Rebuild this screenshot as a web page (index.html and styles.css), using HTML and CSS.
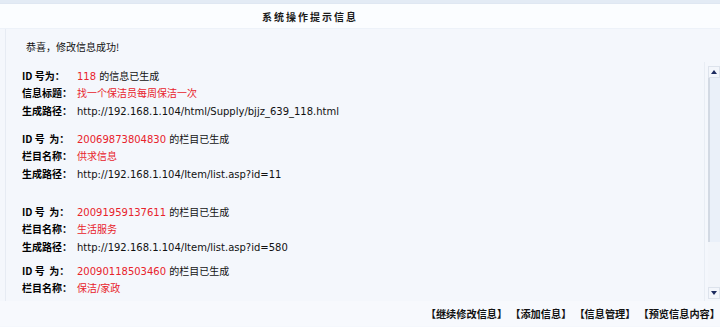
FILE: index.html
```html
<!DOCTYPE html>
<html lang="zh-CN">
<head>
    <meta charset="UTF-8">
    <title>系统操作提示信息</title>
    <link rel="stylesheet" href="styles.css">
</head>
<body>
    <div class="top-line"></div>
    <div class="caption"><span class="caption-text">系统操作提示信息</span></div>

    <div class="main">
        <p class="notice">恭喜，修改信息成功!</p>

        <div class="frame">
            <div class="frame-body">
                <div class="block">
                    <div class="row"><span class="label">ID 号为：</span><span class="red">118</span>&nbsp;的信息已生成</div>
                    <div class="row"><span class="label">信息标题：</span><span class="red">找一个保洁员每周保洁一次</span></div>
                    <div class="row path"><span class="label">生成路径：</span>http://192.168.1.104/html/Supply/bjjz_639_118.html</div>
                </div>
                <div class="block gap-s">
                    <div class="row"><span class="label">ID 号&nbsp; 为：</span><span class="red">20069873804830</span>&nbsp;的栏目已生成</div>
                    <div class="row"><span class="label">栏目名称：</span><span class="red">供求信息</span></div>
                    <div class="row path"><span class="label">生成路径：</span>http://192.168.1.104/Item/list.asp?id=11</div>
                </div>
                <div class="block gap-l">
                    <div class="row"><span class="label">ID 号&nbsp; 为：</span><span class="red">20091959137611</span>&nbsp;的栏目已生成</div>
                    <div class="row"><span class="label">栏目名称：</span><span class="red">生活服务</span></div>
                    <div class="row path"><span class="label">生成路径：</span>http://192.168.1.104/Item/list.asp?id=580</div>
                </div>
                <div class="block gap-xs">
                    <div class="row"><span class="label">ID 号&nbsp; 为：</span><span class="red">20090118503460</span>&nbsp;的栏目已生成</div>
                    <div class="row"><span class="label">栏目名称：</span><span class="red">保洁/家政</span></div>
                </div>
            </div>
            <div class="scrollbar">
                <div class="sb-btn"><span class="arrow-up"></span></div>
                <div class="sb-thumb"></div>
                <div class="sb-track"></div>
                <div class="sb-btn"><span class="arrow-down"></span></div>
            </div>
        </div>
    </div>

    <div class="links">
        <a href="#">【继续修改信息】</a>
        <a href="#">【添加信息】</a>
        <a href="#">【信息管理】</a>
        <a href="#">【预览信息内容】</a>
    </div>
</body>
</html>
```

FILE: styles.css
```css
* {
    box-sizing: border-box;
    margin: 0;
    padding: 0;
}
html, body {
    width: 720px;
    height: 327px;
    overflow: hidden;
}
body {
    font-family: "DejaVu Sans", "Noto Sans CJK SC", sans-serif;
    font-size: 10px;
    color: #111;
    background-color: #f4f7fc;
}

.top-line {
    height: 4px;
    background-color: #e3ebf5;
    border-bottom: 1px solid #dfe7f2;
}

/* caption bar */
.caption {
    height: 25px;
    display: flex;
    align-items: center;
    justify-content: center;
    padding-right: 100px;
    background-color: #fbfdff;
    border-bottom: 1px solid #edf2f9;
}
.caption-text {
    font-family: "Noto Sans CJK SC", sans-serif;
    font-weight: bold;
    letter-spacing: 2px;
    color: #1a1a1a;
}

/* main area */
.main {
    height: 272px;
    margin-left: 5px;
    border-left: 1px solid #e6ebf3;
    display: flex;
    flex-direction: column;
}
.notice {
    font-family: "Noto Sans CJK SC", sans-serif;
    padding: 11px 0 0 20px;
    height: 33px;
    line-height: 14px;
}

.frame {
    flex: 1;
    display: flex;
    overflow: hidden;
}
.frame-body {
    flex: 1;
    padding: 5px 0 0 16px;
    overflow: hidden;
    border-right: 1px solid #e8edf4;
    margin-right: 3px;
}
.row {
    height: 17px;
    line-height: 17px;
    white-space: nowrap;
}
.row.path {
    height: 18px;
    line-height: 20px;
}
.label {
    display: inline-block;
    width: 55px;
    font-family: "Noto Sans CJK SC", sans-serif;
    font-weight: bold;
    color: #000;
}
.red {
    color: #e8232b;
}
.gap-xs { margin-top: 7px; }
.gap-s { margin-top: 11px; }
.gap-l { margin-top: 21px; }

/* scrollbar */
.scrollbar {
    width: 12px;
    margin-top: 4px;
    margin-bottom: 2px;
    display: flex;
    flex-direction: column;
    background-color: #f1f4fa;
}
.sb-btn {
    height: 12px;
    display: flex;
    align-items: center;
    justify-content: center;
    background-color: #f3f6fb;
    border: 1px solid #dde3ec;
}
.arrow-up, .arrow-down {
    width: 0;
    height: 0;
    border-left: 3px solid transparent;
    border-right: 3px solid transparent;
}
.arrow-up {
    border-bottom: 4px solid #1c2a5e;
}
.arrow-down {
    border-top: 4px solid #1c2a5e;
}
.sb-thumb {
    height: 164px;
    background-color: #eaf0f9;
    border-left: 2px solid #d2d9e3;
}
.sb-track {
    flex: 1;
    background-color: #f2f5fa;
}

/* bottom links */
.links {
    height: 25px;
    display: flex;
    align-items: center;
    justify-content: flex-end;
    white-space: nowrap;
    background-color: #f7f9fd;
    font-family: "Noto Sans CJK SC", sans-serif;
    font-size: 10.2px;
    font-weight: bold;
}
.links a {
    color: #111;
    text-decoration: none;
    margin-left: 3px;
}
```
